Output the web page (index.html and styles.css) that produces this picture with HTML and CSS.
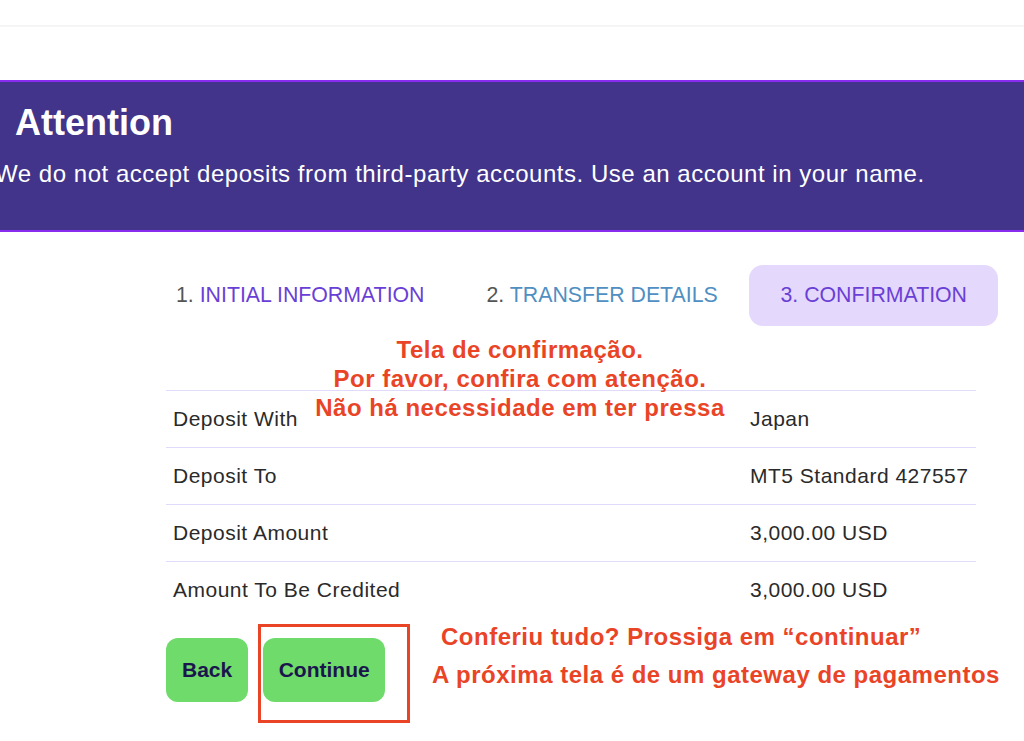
FILE: index.html
```html
<!DOCTYPE html>
<html lang="en">
<head>
<meta charset="utf-8">
<title>Deposit confirmation</title>
<link rel="stylesheet" href="styles.css">
</head>
<body>
<div class="topbar"></div>
<section class="banner">
  <h1 class="banner-title">Attention</h1>
  <p class="banner-text">We do not accept deposits from third-party accounts. Use an account in your name.</p>
</section>
<main class="content">
  <nav class="steps">
    <div class="step"><span><span class="num">1.</span> <span class="done">INITIAL INFORMATION</span></span></div>
    <div class="step"><span><span class="num">2.</span> <span class="prev">TRANSFER DETAILS</span></span></div>
    <div class="step active">3. CONFIRMATION</div>
  </nav>
  <div class="summary">
    <div class="row"><span class="label">Deposit With</span><span class="value">Japan</span></div>
    <div class="row"><span class="label">Deposit To</span><span class="value">MT5 Standard 427557</span></div>
    <div class="row"><span class="label">Deposit Amount</span><span class="value">3,000.00 USD</span></div>
    <div class="row"><span class="label">Amount To Be Credited</span><span class="value">3,000.00 USD</span></div>
  </div>
  <div class="actions">
    <button class="btn btn-back">Back</button>
    <button class="btn">Continue</button>
  </div>
  <div class="note note-top">Tela de confirmação.<br>Por favor, confira com atenção.<br>Não há necessidade em ter pressa</div>
  <div class="highlight"></div>
  <div class="note note-bottom"><span class="l1">Conferiu tudo? Prossiga em “continuar”</span><br>A próxima tela é de um gateway de pagamentos</div>
</main>
</body>
</html>
```
FILE: styles.css
```css
html {
  overflow: hidden;
}
html, body {
  margin: 0;
  padding: 0;
  background: #ffffff;
  font-family: "Liberation Sans", Arial, Helvetica, sans-serif;
}
.topbar {
  height: 25px;
  border-bottom: 2px solid #f5f5f5;
  margin-bottom: 53px;
}
.banner {
  background: #41348a;
  border-top: 2px solid #8a2cf0;
  border-bottom: 2px solid #8a2cf0;
  height: 148px;
  color: #ffffff;
  overflow: hidden;
}
.banner-title {
  margin: 0;
  padding: 20px 0 0 15px;
  font-size: 36px;
  font-weight: bold;
  line-height: 42px;
}
.banner-text {
  margin: 0 0 0 -5px;
  padding: 16px 0 0 0;
  font-size: 24px;
  letter-spacing: 0.53px;
  line-height: 28px;
  white-space: nowrap;
}
.content {
  position: relative;
  padding: 33px 0 40px 145px;
  width: 853px;
}
.steps {
  display: flex;
  height: 61px;
}
.step {
  display: flex;
  align-items: center;
  padding: 0 31px;
  font-size: 21.3px;
  color: #555555;
  border-radius: 14px;
  white-space: nowrap;
}
.step .done { color: #6a3fd6; }
.step .prev { color: #4f8fc2; }
.step.active {
  background: #e4d9fc;
  color: #6a3fd6;
  margin-left: auto;
}
.summary {
  margin: 64px 22px 0 21px;
}
.row {
  display: flex;
  align-items: center;
  height: 56px;
  border-top: 1.5px solid #e2dafa;
  font-size: 21px;
  letter-spacing: 0.5px;
  color: #2a2a2a;
  padding-left: 7px;
}
.label { width: 577px; }
.actions {
  display: flex;
  gap: 15px;
  margin: 20px 0 0 21px;
}
.btn {
  height: 64px;
  padding: 0 15.5px;
  border: none;
  border-radius: 12px;
  background: #6fdb6a;
  color: #1b154e;
  font-family: "Liberation Sans", Arial, sans-serif;
  font-size: 21px;
  font-weight: bold;
}
.btn-back { padding: 0 16px; }
.note {
  position: absolute;
  color: #ea4427;
  font-weight: bold;
  font-size: 24px;
  letter-spacing: 0.5px;
  white-space: nowrap;
}
.note-top {
  left: 270px;
  top: 103px;
  width: 500px;
  text-align: center;
  line-height: 29px;
}
.note-bottom {
  left: 432px;
  top: 386px;
  line-height: 38px;
}
.note-bottom .l1 { padding-left: 9px; }
.highlight {
  position: absolute;
  left: 258px;
  top: 392px;
  width: 146px;
  height: 93px;
  border: 3px solid #ea4427;
}
```
